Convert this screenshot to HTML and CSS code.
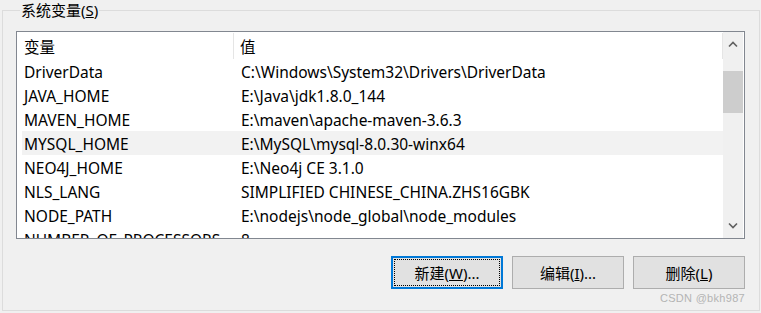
FILE: index.html
```html
<!DOCTYPE html>
<html lang="zh-CN">
<head>
    <meta charset="UTF-8">
    <title>系统变量</title>
    <link rel="stylesheet" href="styles.css">
</head>
<body>
    <fieldset class="group">
        <legend>系统变量(<u>S</u>)</legend>

        <div class="listbox">
            <div class="table">
                <div class="head">
                    <div class="col-name">变量</div>
                    <div class="col-value">值</div>
                </div>
                <div class="row"><div class="col-name">DriverData</div><div class="col-value">C:\Windows\System32\Drivers\DriverData</div></div>
                <div class="row"><div class="col-name">JAVA_HOME</div><div class="col-value">E:\Java\jdk1.8.0_144</div></div>
                <div class="row"><div class="col-name">MAVEN_HOME</div><div class="col-value">E:\maven\apache-maven-3.6.3</div></div>
                <div class="row hover"><div class="col-name">MYSQL_HOME</div><div class="col-value">E:\MySQL\mysql-8.0.30-winx64</div></div>
                <div class="row"><div class="col-name">NEO4J_HOME</div><div class="col-value">E:\Neo4j CE 3.1.0</div></div>
                <div class="row"><div class="col-name">NLS_LANG</div><div class="col-value">SIMPLIFIED CHINESE_CHINA.ZHS16GBK</div></div>
                <div class="row"><div class="col-name">NODE_PATH</div><div class="col-value">E:\nodejs\node_global\node_modules</div></div>
                <div class="row"><div class="col-name">NUMBER_OF_PROCESSORS</div><div class="col-value">8</div></div>
            </div>

            <div class="scrollbar">
                <svg class="arrow" width="12" height="8" viewBox="0 0 12 8"><path d="M2 6.5 L6 2.5 L10 6.5" fill="none" stroke="#606060" stroke-width="1.6"/></svg>
                <div class="track">
                    <div class="thumb"></div>
                </div>
                <svg class="arrow" width="12" height="8" viewBox="0 0 12 8"><path d="M2 1.5 L6 5.5 L10 1.5" fill="none" stroke="#606060" stroke-width="1.6"/></svg>
            </div>
        </div>

        <div class="buttons">
            <button class="focused"><span>新建(<u>W</u>)...</span></button>
            <button><span>编辑(<u>I</u>)...</span></button>
            <button><span>删除(<u>L</u>)</span></button>
        </div>
    </fieldset>

    <div class="watermark">CSDN @bkh987</div>
</body>
</html>
```

FILE: styles.css
```css
body {
    margin: 0;
    width: 761px;
    height: 313px;
    background-color: #f0f0f0;
    font-family: "Noto Sans", "Noto Sans CJK SC", sans-serif;
    font-size: 15.5px;
    color: #000;
    position: relative;
    overflow: hidden;
}

.group {
    box-sizing: border-box;
    margin: 0 0 0 2px;
    width: 758px;
    height: 311px;
    border: 1px solid #dcdcdc;
    padding: 11px 14px 0 13px;
}
.group legend {
    padding: 0 1px;
    margin-left: 4px;
    line-height: 20px;
    font-size: 15px;
}

.listbox {
    display: flex;
    width: 727px;
    height: 206px;
    border: 1px solid #828790;
    background-color: #fff;
    overflow: hidden;
}

.table {
    width: 706px;
    overflow: hidden;
}
.head {
    display: flex;
    height: 26px;
    margin-top: 1px;
    align-items: center;
    border-right: 1px solid #e5e5e5;
}
.head .col-name {
    width: 209px;
    padding-left: 7px;
    border-right: 1px solid #e5e5e5;
    align-self: stretch;
    display: flex;
    align-items: center;
}
.row {
    display: flex;
    height: 24px;
    align-items: center;
    margin-left: 5px;
    padding-top: 1px;
    box-sizing: border-box;
}
.row .col-name {
    width: 210px;
    padding-left: 2px;
}
.col-value {
    padding-left: 6px;
    white-space: nowrap;
}
.row .col-value {
    padding-left: 7px;
}
.row.hover {
    background-color: #f2f2f2;
}

.scrollbar {
    width: 20px;
    margin-right: 1px;
    background-color: #f0f0f0;
    display: flex;
    flex-direction: column;
    align-items: center;
}
.arrow {
    display: block;
    margin: 8px 0;
}
.track {
    flex: 1;
    width: 100%;
    padding-top: 15px;
}
.thumb {
    height: 42px;
    background-color: #cdcdcd;
}

.buttons {
    display: flex;
    justify-content: flex-end;
    gap: 9px;
    margin-top: 17px;
}
button {
    box-sizing: border-box;
    width: 112px;
    height: 33px;
    font-family: inherit;
    font-size: 15px;
    color: #000;
    background-color: #e1e1e1;
    border: 1px solid #adadad;
    padding: 0;
}
button.focused {
    border: 2px solid #0078d7;
    padding: 1px;
}
button.focused span {
    display: flex;
    align-items: center;
    justify-content: center;
    height: 100%;
    outline: 1px dotted #000;
    outline-offset: -1px;
}

.watermark {
    position: absolute;
    right: 16px;
    top: 292px;
    font-family: "Liberation Sans", sans-serif;
    font-size: 11px;
    letter-spacing: 0.3px;
    color: #b4b4b4;
}
```
